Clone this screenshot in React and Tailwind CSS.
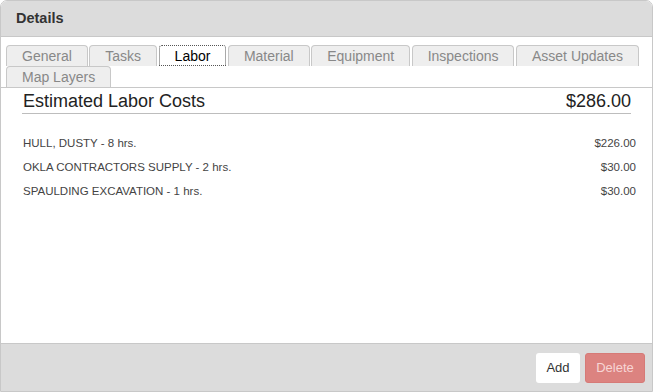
import { useState } from 'react';

const TABS = ['General', 'Tasks', 'Labor', 'Material', 'Equipment', 'Inspections', 'Asset Updates', 'Map Layers'];

const LABOR = [
  { name: 'HULL, DUSTY', hours: 8, cost: 226 },
  { name: 'OKLA CONTRACTORS SUPPLY', hours: 2, cost: 30 },
  { name: 'SPAULDING EXCAVATION', hours: 1, cost: 30 },
];

const money = (n) => `$${n.toFixed(2)}`;

export default function App() {
  const [active, setActive] = useState('Labor');
  const total = LABOR.reduce((s, l) => s + l.cost, 0);

  return (
    <div
      className="w-[653px] h-[392px] flex flex-col bg-white border border-[#c8c8c8] rounded-t-[7px] overflow-hidden text-[#333]"
      style={{ fontFamily: '"Liberation Sans", Arial, sans-serif' }}
    >
      {/* Header */}
      <div className="h-[36px] shrink-0 bg-[#dcdcdc] border-b border-[#c8c8c8] flex items-center px-[15px]">
        <h3 className="text-[14.5px] font-bold text-[#333] leading-none">Details</h3>
      </div>

      {/* Tabs */}
      <div className="pt-[8px] px-[5px] border-b border-[#c8c8c8] flex flex-wrap gap-x-[1.5px]">
        {TABS.map((t) => (
          <button
            key={t}
            onClick={() => setActive(t)}
            className={
              t === active
                ? 'h-[21px] px-[15px] text-[14px] leading-none text-black bg-white border border-dotted border-[#555] rounded-t-[3px] -mb-px'
                : 'h-[21px] px-[15px] text-[14px] leading-none text-[#888] bg-[#eeeeee] border border-[#c8c8c8] border-b-0 rounded-t-[4px]'
            }
          >
            {t}
          </button>
        ))}
      </div>

      {/* Content */}
      <div className="flex-1 flex flex-col">
        <div className="mx-[21px] mt-[3px] flex justify-between items-end border-b border-[#bdbdbd] pb-[1px]">
          <span className="text-[18px] leading-[21px] pl-[1px] text-[#222]">Estimated Labor Costs</span>
          <span className="text-[18px] leading-[21px] text-[#222]">{money(total)}</span>
        </div>

        <div className="mt-[18px] pl-[22px] pr-[16px] flex flex-col">
          {LABOR.map((l) => (
            <div key={l.name} className="h-[24px] flex items-center justify-between text-[11.5px] text-[#444]">
              <span>{l.name} - {l.hours} hrs.</span>
              <span>{money(l.cost)}</span>
            </div>
          ))}
        </div>
      </div>

      {/* Footer */}
      <div className="h-[48px] shrink-0 bg-[#dcdcdc] border-t border-[#c8c8c8] flex items-center justify-end gap-[5px] pr-[7px]">
        <button className="h-[30px] w-[44px] bg-white rounded-[3px] text-[13px] text-[#333]">Add</button>
        <button disabled className="h-[30px] w-[60px] bg-[#dc8380] rounded-[3px] text-[13px] text-[#f7d6d5] border border-[#d67a77]">
          Delete
        </button>
      </div>
    </div>
  );
}
